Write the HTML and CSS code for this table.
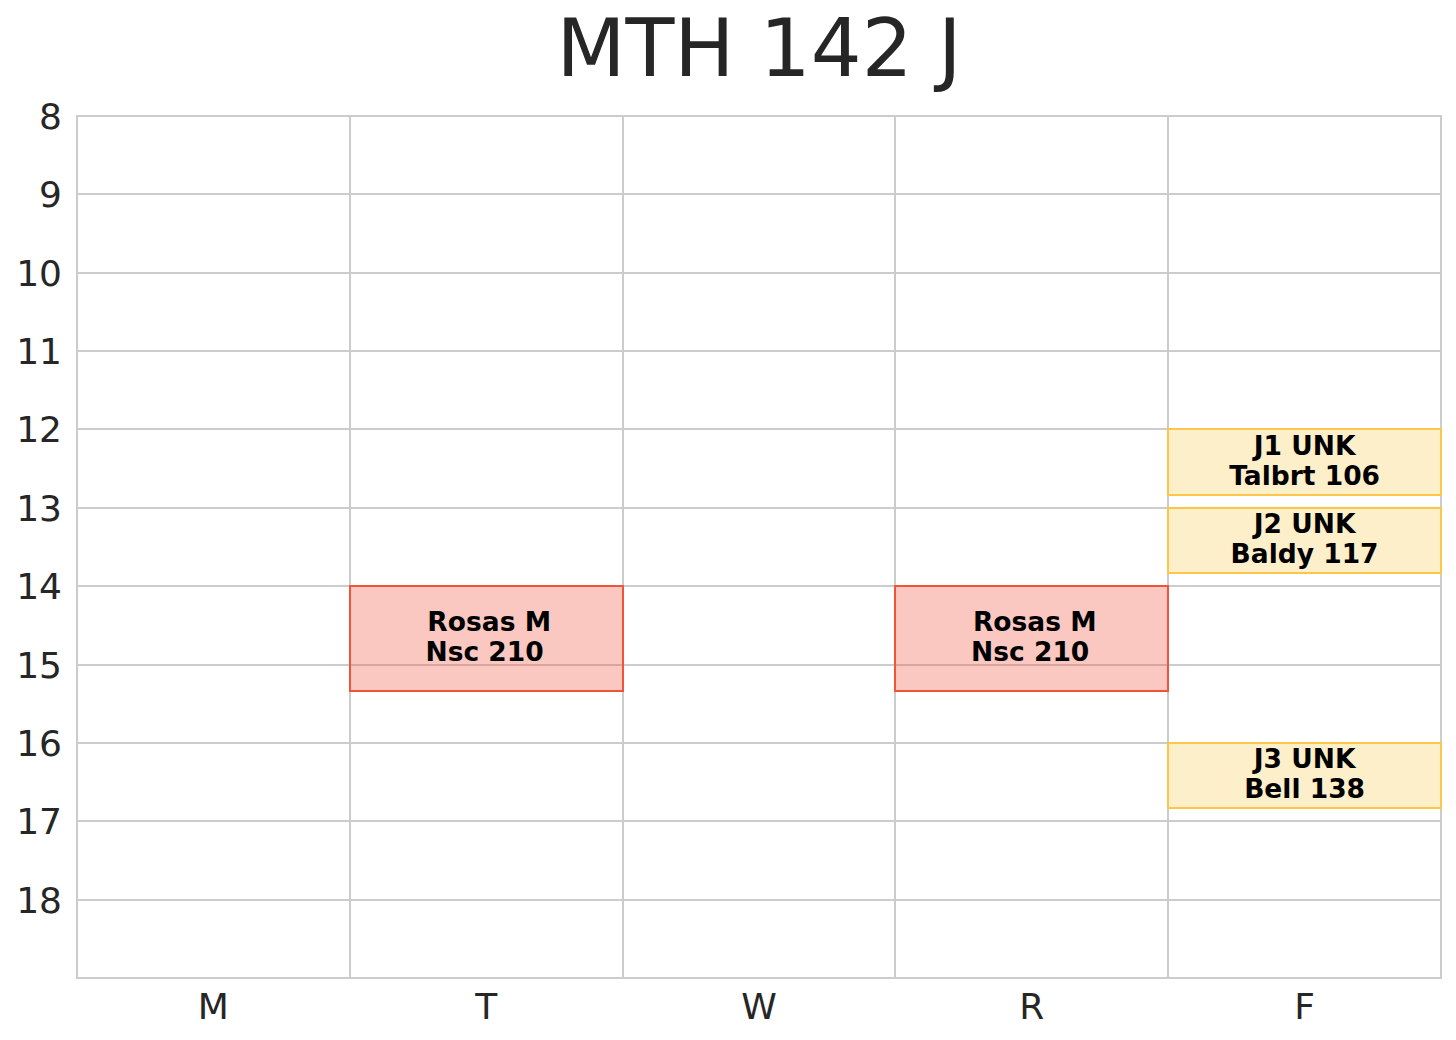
FILE: index.html
```html
<!DOCTYPE html>
<html>
<head>
<meta charset="utf-8">
<link rel="stylesheet" href="styles.css">
</head>
<body>
<div class="figure">
  <div class="title">MTH 142 J</div>
  <div class="yaxis">
    <div class="tick"><span>8</span></div>
    <div class="tick"><span>9</span></div>
    <div class="tick"><span>10</span></div>
    <div class="tick"><span>11</span></div>
    <div class="tick"><span>12</span></div>
    <div class="tick"><span>13</span></div>
    <div class="tick"><span>14</span></div>
    <div class="tick"><span>15</span></div>
    <div class="tick"><span>16</span></div>
    <div class="tick"><span>17</span></div>
    <div class="tick"><span>18</span></div>
  </div>
  <div class="plot">
    <div class="vlines">
      <div class="col"></div><div class="col"></div><div class="col"></div><div class="col"></div><div class="col last"></div>
    </div>
    <div class="hlines">
      <div class="row"></div><div class="row"></div><div class="row"></div><div class="row"></div><div class="row"></div><div class="row"></div><div class="row"></div><div class="row"></div><div class="row"></div><div class="row"></div><div class="row last"></div>
    </div>
    <div class="events">
      <div class="event lecture" style="grid-column: 2; grid-row: 37 / 45;"><div class="label">Rosas M
Nsc 210 </div></div>
      <div class="event lecture" style="grid-column: 4; grid-row: 37 / 45;"><div class="label">Rosas M
Nsc 210 </div></div>
      <div class="event lab" style="grid-column: 5; grid-row: 25 / 30;"><div class="label">J1 UNK
Talbrt 106</div></div>
      <div class="event lab" style="grid-column: 5; grid-row: 31 / 36;"><div class="label">J2 UNK
Baldy 117</div></div>
      <div class="event lab" style="grid-column: 5; grid-row: 49 / 54;"><div class="label">J3 UNK
Bell 138</div></div>
    </div>
  </div>
  <div class="xaxis">
    <div class="xtick">M</div>
    <div class="xtick">T</div>
    <div class="xtick">W</div>
    <div class="xtick">R</div>
    <div class="xtick">F</div>
  </div>
</div>
</body>
</html>
```

FILE: styles.css
```css
html, body {
  margin: 0;
  padding: 0;
  background: #ffffff;
}

.figure {
  width: 1456px;
  height: 1040px;
  display: grid;
  grid-template-columns: 76px 1366px 1fr;
  grid-template-rows: 115px 864px 1fr;
  font-family: "DejaVu Sans", "Liberation Sans", sans-serif;
  color: #262626;
}

.title {
  grid-column: 2;
  grid-row: 1;
  text-align: center;
  font-size: 80px;
  line-height: 80px;
  padding-top: 9px;
}

.yaxis {
  grid-column: 1;
  grid-row: 2;
  display: flex;
  flex-direction: column;
  padding-top: 1px;
  padding-bottom: 1px;
}

.tick {
  flex: 1;
  text-align: right;
  padding-right: 14px;
  font-size: 36px;
  line-height: 36px;
}

.tick span {
  display: block;
  margin-top: -17px;
}

.plot {
  grid-column: 2;
  grid-row: 2;
  display: grid;
  grid-template-columns: 1fr;
  grid-template-rows: 1fr;
}

.vlines, .hlines, .events {
  grid-area: 1 / 1;
}

.vlines {
  display: flex;
}

.col {
  flex: 1;
  border-left: 2px solid #cccccc;
}

.col.last {
  border-right: 2px solid #cccccc;
}

.hlines {
  display: flex;
  flex-direction: column;
}

.row {
  flex: 1;
  border-top: 2px solid #cccccc;
}

.row.last {
  border-bottom: 2px solid #cccccc;
}

.events {
  margin: 1px;
  display: grid;
  grid-template-columns: repeat(5, 1fr);
  grid-template-rows: repeat(66, 1fr);
}

.event {
  margin: -1px;
  border: 2px solid;
  display: flex;
  align-items: center;
  justify-content: center;
  padding-bottom: 3px;
  min-height: 0;
}

.event.lecture {
  background: rgba(240, 85, 58, 0.32);
  border-color: #f0553a;
  padding-left: 6px;
}

.event.lab {
  background: rgba(252, 196, 70, 0.28);
  border-color: #fcc64b;
}

.label {
  white-space: pre;
  text-align: center;
  font-weight: bold;
  font-size: 26.5px;
  line-height: 30px;
  color: #000000;
}

.xaxis {
  grid-column: 2;
  grid-row: 3;
  display: flex;
  padding: 10px 1px 0 1px;
}

.xtick {
  flex: 1;
  text-align: center;
  font-size: 36px;
  line-height: 36px;
}
```
